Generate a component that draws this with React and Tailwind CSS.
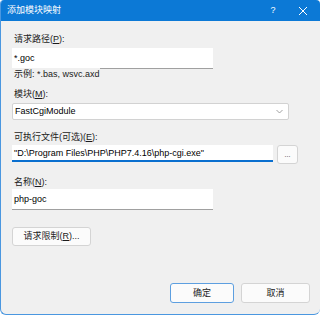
import React from 'react';

const font = { fontFamily: '"Liberation Sans", "Noto Sans CJK SC", sans-serif' };

function Label({ text, keyChar, suffix = '):' }) {
  return (
    <div className="h-[12px] leading-[12px] text-[9px] text-[#1b1b1b]">
      {text}(<span className="underline">{keyChar}</span>{suffix}
    </div>
  );
}

export default function App() {
  return (
    <div className="w-[320px] h-[315px] bg-white" style={font}>
      <div className="w-[320px] h-[315px] flex flex-col bg-[#f0f0f0] rounded-t-[4px] rounded-b-[6px] border-l border-b border-[#4a97e0] overflow-hidden">
        {/* title bar */}
        <div className="h-[21px] shrink-0 bg-[#0c79d6] flex items-center pl-[6px] text-white text-[9px]">
          <span className="flex-1">添加模块映射</span>
          <span className="w-[20px] text-center mr-[15px]">?</span>
          <svg width="10" height="10" viewBox="0 0 10 10" className="mr-[12px]">
            <path d="M1 1 L9 9 M9 1 L1 9" stroke="white" strokeWidth="1" />
          </svg>
        </div>

        <div className="flex flex-col pl-[11px] pr-[10px] flex-1">
          <div className="mt-[12px] pl-[2px]">
            <Label text="请求路径" keyChar="P" />
          </div>
          <div className="mt-[3px] h-[21px] w-[201px] bg-white border-b border-[#a0a0a0] text-[9px] leading-[21px] pl-[2px] text-black">
            *.goc
          </div>
          <div className="-mt-[1px] h-[12px] w-[88px] bg-[#f0f0f0] pl-[2px] text-[9px] leading-[12px] text-[#1b1b1b]">
            示例: *.bas, wsvc.axd
          </div>

          <div className="mt-[8px] pl-[2px]">
            <Label text="模块" keyChar="M" />
          </div>
          <div className="mt-[3px] h-[17px] w-[277px] bg-white border border-[#d2d2d2] rounded-[2px] flex items-center pl-[2px] pr-[5px] text-[9px] text-black">
            <span className="flex-1">FastCgiModule</span>
            <svg width="7" height="5" viewBox="0 0 7 5">
              <path d="M0.5 1 L3.5 4 L6.5 1" stroke="#8a8a8a" strokeWidth="0.8" fill="none" />
            </svg>
          </div>

          <div className="mt-[11px] pl-[2px]">
            <Label text="可执行文件(可选)" keyChar="E" />
          </div>
          <div className="mt-[2px] flex items-start">
            <div className="h-[17px] w-[261px] bg-white border-b-2 border-[#0a6fcf] text-[9px] leading-[16px] pl-[2px] text-black whitespace-nowrap">
              "D:\Program Files\PHP\PHP7.4.16\php-cgi.exe"
            </div>
            <div className="ml-[4px] h-[19px] w-[21px] bg-[#fbfbfb] border border-[#d4d4d4] rounded-[3px] text-[7px] leading-[17px] text-center text-[#333]">
              ...
            </div>
          </div>

          <div className="mt-[12px] pl-[2px]">
            <Label text="名称" keyChar="N" />
          </div>
          <div className="mt-[1px] h-[21px] w-[201px] bg-white border-b border-[#a0a0a0] text-[9px] leading-[21px] pl-[2px] text-black">
            php-goc
          </div>

          <div className="mt-[17px] h-[19px] w-[79px] bg-[#fbfbfb] border border-[#d4d4d4] rounded-[3px] text-[9px] leading-[17px] text-center text-[#1b1b1b]">
            请求限制(<span className="underline">R</span>)...
          </div>

          <div className="mt-[37px] flex justify-end">
            <div className="h-[20px] w-[64px] bg-[#fbfbfb] border border-[#5d9fe0] rounded-[3px] text-[9px] leading-[18px] text-center text-[#1b1b1b]">
              确定
            </div>
            <div className="ml-[7px] h-[20px] w-[69px] bg-[#fbfbfb] border border-[#d4d4d4] rounded-[3px] text-[9px] leading-[18px] text-center text-[#1b1b1b]">
              取消
            </div>
          </div>
        </div>
      </div>
    </div>
  );
}
